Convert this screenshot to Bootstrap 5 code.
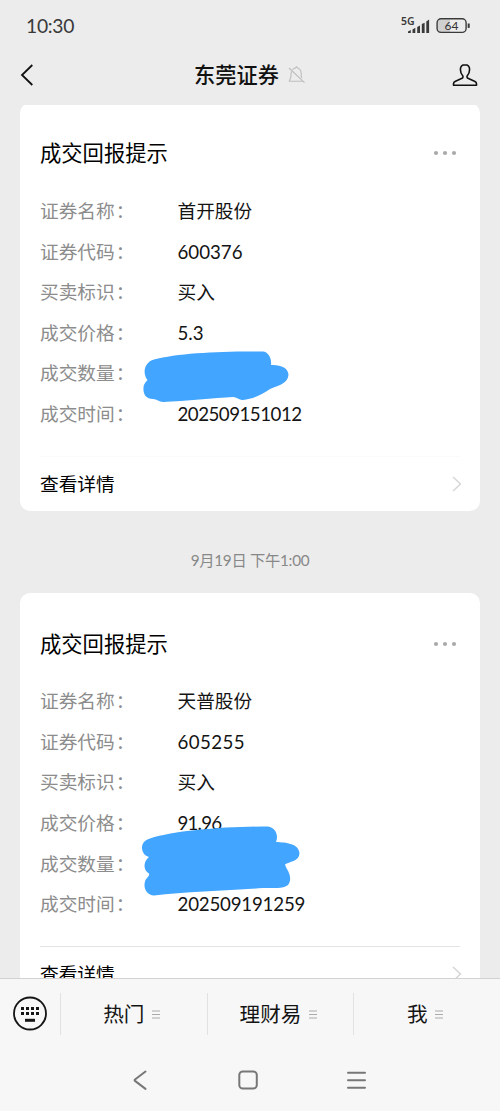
<!DOCTYPE html>
<html lang="zh-CN">
<head>
<meta charset="utf-8">
<meta name="viewport" content="width=device-width, initial-scale=1">
<title>东莞证券</title>
<link href="https://cdn.jsdelivr.net/npm/bootstrap@5.3.0/dist/css/bootstrap.min.css" rel="stylesheet">
<style>
body{font-family:"Lato","Noto Sans CJK SC",sans-serif;background:#ececec;color:#141414;height:1111px;overflow:hidden}
svg{display:block;flex:none}
.status{height:50px;padding:2px 29px 0 26px;color:#3a3a3a}
.clock{font-size:19.3px;letter-spacing:-.3px}
.topbar{height:55px;padding:0 22px 5px 20px}
.title-group{gap:9px;margin-left:13px}
.heading{font-size:21.2px;font-weight:500;line-height:30px;color:#111}
.feed{flex:1 1 0;min-height:0;padding:0 20px}
.notice{background:#fff;border-radius:10px;height:408.3px;padding:35.5px 20px 0}
.notice:first-child{margin-top:-2.3px}
.notice-title{font-size:21.3px;line-height:30px;color:#000;margin-bottom:22.8px}
.line{height:40.6px;font-size:18.7px;line-height:40.6px;white-space:nowrap}
.key{width:137.5px;color:#8c8c8c}
.colon{margin-left:1px}
.detail{margin-top:21.5px;border-top:1px solid #fafafa;height:54px;font-size:18.7px;color:#000}
.detail svg{margin-right:-2px}
.detail.ruled{border-color:#e3e3e3}
.when{height:82px;font-size:15.3px;letter-spacing:-.3px;color:#888;padding-top:38px}
.scribble{left:-38px;top:-8px;z-index:2}
.scribble-tall{top:-20px}
.dock{background:#f7f7f7;border-top:1px solid #d2d2d2;height:133px}
.menus{height:69px}
.kbd-cell{width:60px;padding-left:12px}
.menu-cell{height:42px;border-left:1px solid #e2e2e2;font-size:20.6px;flex:1 1 0;gap:8px;padding:1px 4px 0 0}
.system{height:63px;padding-left:132px}
</style>
</head>
<body class="d-flex flex-column">
<header>
  <div class="status d-flex align-items-center justify-content-between">
    <span class="clock">10:30</span>
    <svg width="72" height="24" viewBox="400 14 72 24">
      <text x="402" y="25" font-family="Noto Sans" font-size="10.500" font-weight="600" fill="#3a3a3a">5G</text>
      <path d="M409 33v-1.500l2.800-1.500v3zM413.500 33v-3.500l2.800-1.800v5.300zM418.200 33v-6l2.800-1.500v7.500zM422.800 33v-9l2.800-1.200v10.200zM427.300 33v-11.500l2.800-2v13.500z" fill="#3a3a3a"/>
      <path d="M439 19.500h12v13h-12z" fill="#d0d0d0"/>
      <rect x="438.100" y="18.800" width="29" height="13.600" rx="4" fill="none" stroke="#3a3a3a" stroke-width="1.400"/>
      <path d="M469.700 23.500v4.400" stroke="#3a3a3a" stroke-width="2"/>
      <text x="445.500" y="30" font-size="12" fill="#333">64</text>
    </svg>
  </div>
  <div class="topbar d-flex align-items-center justify-content-between">
    <svg width="14" height="24" viewBox="0 0 14 24" fill="none" stroke="#111" stroke-width="1.800"><path d="M12.300 2 2 12l10.300 10"/></svg>
    <div class="title-group d-flex align-items-center">
      <span class="heading">东莞证券</span>
      <svg width="17" height="18" viewBox="288 66 17 18" fill="none" stroke="#bdbdbd" stroke-width="1.100"><path d="M291.500 71.500c-.6 1.500-.5 3-.5 5l-1.700 4.800h14M292.500 69.600c1-1 2-1.300 2.800-1.600l1.200-1.200 1.200 1.200c2.300.8 3.500 2.500 3.500 5.500v3l.8 1.500M289 68l15.500 14.700"/></svg>
    </div>
    <svg width="26" height="25" viewBox="452 63 26 25" fill="none" stroke="#111" stroke-width="1.600" stroke-linejoin="round"><path d="M465 64.700c-3 0-4.600 2-4.600 4.900 0 2.500 1 4.700 2.300 6.100.7 1.300.2 2.300-1.200 2.900l-6 2.600c-1.400.6-2 1.300-2 2.500v1.600h23v-1.600c0-1.200-.6-1.900-2-2.500l-6-2.600c-1.400-.6-1.900-1.600-1.200-2.900 1.300-1.400 2.300-3.600 2.300-6.100 0-2.900-1.600-4.900-4.600-4.900z"/></svg>
  </div>
</header>

<main class="feed overflow-hidden">
  <section class="notice">
    <div class="notice-title d-flex align-items-center justify-content-between"><span>成交回报提示</span>
      <svg width="28" height="6" viewBox="0 0 28 6" fill="#aaa"><circle cx="4" cy="3" r="2.100"/><circle cx="13" cy="3" r="2.100"/><circle cx="22" cy="3" r="2.100"/></svg></div>
    <div class="line d-flex"><span class="key">证券名称<span class="colon">：</span></span><span>首开股份</span></div>
    <div class="line d-flex"><span class="key">证券代码<span class="colon">：</span></span><span>600376</span></div>
    <div class="line d-flex"><span class="key">买卖标识<span class="colon">：</span></span><span>买入</span></div>
    <div class="line d-flex"><span class="key">成交价格<span class="colon">：</span></span><span>5.3</span></div>
    <div class="line d-flex"><span class="key">成交数量<span class="colon">：</span></span><span class="position-relative">
      <svg class="scribble position-absolute" width="155" height="60" viewBox="140 345 155 60"><path fill="#42a5ff" d="M154 359.500C178 353 222 351 263 351.500C268 352 272 358 271 365C281 364.500 288 368 288.500 374.500C288 383 280 385 270 389C262 395 252 399 243 400C239 400 238 397.500 233 397C215 398 185 401 163 402C159 402 157 399 153 399C146 399 143 394 143.500 388C143.500 384 146 382 147.500 380C142 373 144.500 362 154 359.500Z"/></svg></span></div>
    <div class="line d-flex"><span class="key">成交时间<span class="colon">：</span></span><span style="letter-spacing:-.5px">202509151012</span></div>
    <div class="detail d-flex align-items-center justify-content-between"><span>查看详情</span>
      <svg width="10" height="18" viewBox="0 0 10 18" fill="none" stroke="#d5d5d5" stroke-width="1.400"><path d="m1 2 7.500 7L1 16"/></svg></div>
  </section>
  <div class="when text-center">9月19日 下午1:00</div>
  <section class="notice">
    <div class="notice-title d-flex align-items-center justify-content-between"><span>成交回报提示</span>
      <svg width="28" height="6" viewBox="0 0 28 6" fill="#aaa"><circle cx="4" cy="3" r="2.100"/><circle cx="13" cy="3" r="2.100"/><circle cx="22" cy="3" r="2.100"/></svg></div>
    <div class="line d-flex"><span class="key">证券名称<span class="colon">：</span></span><span>天普股份</span></div>
    <div class="line d-flex"><span class="key">证券代码<span class="colon">：</span></span><span style="letter-spacing:.4px">605255</span></div>
    <div class="line d-flex"><span class="key">买卖标识<span class="colon">：</span></span><span>买入</span></div>
    <div class="line d-flex"><span class="key">成交价格<span class="colon">：</span></span><span style="letter-spacing:-.8px">91.96</span></div>
    <div class="line d-flex"><span class="key">成交数量<span class="colon">：</span></span><span class="position-relative">
      <svg class="scribble scribble-tall position-absolute" width="165" height="74" viewBox="140 823.500 165 74"><path fill="#42a5ff" d="M150 838C175 830 225 826 268 826C275 827 279 834 276 841.500C286 842 299 843 299.500 853C299 861 289 861 285 864C287 870 291 873 290 880C289 886 284 887 278 887.500L263 887.500C230 890 185 891 154 895C147 895 143 888 145 881C146 877 150 876 149 873C143 870 143 861 149 856.500C144 855 142 851 142 847C142 842 146 839 150 838Z"/></svg></span></div>
    <div class="line d-flex"><span class="key">成交时间<span class="colon">：</span></span><span style="letter-spacing:-.2px">202509191259</span></div>
    <div class="detail ruled d-flex align-items-center justify-content-between"><span>查看详情</span>
      <svg width="10" height="18" viewBox="0 0 10 18" fill="none" stroke="#d5d5d5" stroke-width="1.400"><path d="m1 2 7.500 7L1 16"/></svg></div>
  </section>
</main>

<footer class="dock">
  <nav class="menus d-flex align-items-center">
    <div class="kbd-cell"><svg width="36" height="36" viewBox="0 .5 36 36"><circle cx="18" cy="18" r="16" fill="none" stroke="#151515" stroke-width="1.800"/><path d="M9 13h18M9 18h18" stroke="#151515" stroke-width="3" stroke-dasharray="3 2"/><path d="M13 24.800h10" stroke="#151515" stroke-width="3"/></svg></div>
    <div class="menu-cell d-flex align-items-center justify-content-center"><span>热门</span><svg width="8" height="9" viewBox="0 0 8 9" stroke="#aaa"><path d="M0 1h8M0 4.500h8M0 8h8"/></svg></div>
    <div class="menu-cell d-flex align-items-center justify-content-center"><span>理财易</span><svg width="8" height="9" viewBox="0 0 8 9" stroke="#aaa"><path d="M0 1h8M0 4.500h8M0 8h8"/></svg></div>
    <div class="menu-cell d-flex align-items-center justify-content-center"><span>我</span><svg width="8" height="9" viewBox="0 0 8 9" stroke="#aaa"><path d="M0 1h8M0 4.500h8M0 8h8"/></svg></div>
  </nav>
  <div class="system d-flex align-items-center">
    <svg width="236" height="24" viewBox="132 1067.500 236 24" fill="none" stroke="#777" stroke-width="2" stroke-linecap="round" stroke-linejoin="round"><path d="m145.500 1071-10.500 8q-.8.700 0 1.400l10.500 8"/><rect x="239.300" y="1071" width="17.500" height="17" rx="3.500"/><path d="M348 1072.300h17M348 1079.800h17M348 1087.200h17"/></svg>
  </div>
</footer>
<script src="https://cdn.jsdelivr.net/npm/bootstrap@5.3.0/dist/js/bootstrap.bundle.min.js"></script>
</body>
</html>
